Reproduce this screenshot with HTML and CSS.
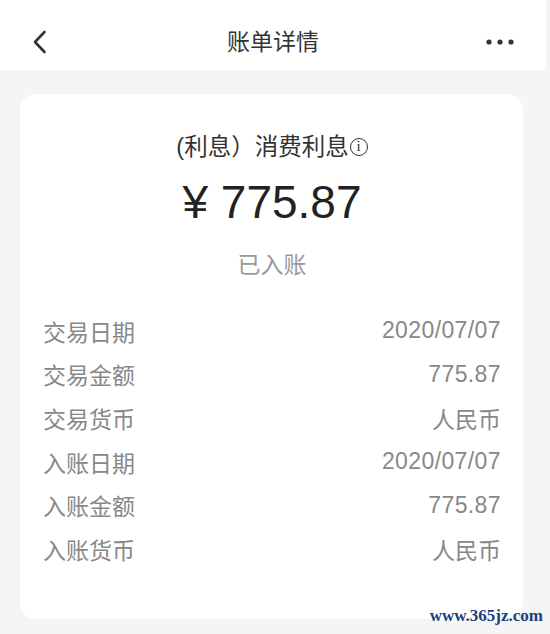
FILE: index.html
```html
<!DOCTYPE html>
<html lang="zh-CN">
<head>
    <meta charset="UTF-8">
    <title>账单详情</title>
    <link rel="stylesheet" href="styles.css">
</head>
<body>
    <!-- Top bar -->
    <div class="topbar">
        <svg class="back" width="16" height="26" viewBox="0 0 16 26">
            <path d="M12.5 3 L3 13 L12.5 23" fill="none" stroke="#333" stroke-width="2.6" stroke-linecap="round" stroke-linejoin="round"/>
        </svg>
        <div class="topbar-title">账单详情</div>
        <svg class="more" width="30" height="8" viewBox="0 0 30 8">
            <circle cx="3" cy="4" r="2.6" fill="#333"/>
            <circle cx="14" cy="4" r="2.6" fill="#333"/>
            <circle cx="25" cy="4" r="2.6" fill="#333"/>
        </svg>
    </div>

    <!-- Bill card -->
    <div class="card">
        <div class="bill-title">(利息）消费利息<span class="info">i</span></div>
        <div class="bill-amount">¥ 775.87</div>
        <div class="bill-status">已入账</div>

        <div class="rows">
            <div class="row"><span>交易日期</span><span class="num">2020/07/07</span></div>
            <div class="row"><span>交易金额</span><span class="num">775.87</span></div>
            <div class="row"><span>交易货币</span><span>人民币</span></div>
            <div class="row"><span>入账日期</span><span class="num">2020/07/07</span></div>
            <div class="row"><span>入账金额</span><span class="num">775.87</span></div>
            <div class="row"><span>入账货币</span><span>人民币</span></div>
        </div>
    </div>

    <div class="watermark">www.365jz.com</div>
</body>
</html>
```

FILE: styles.css
```css
body {
    margin: 0;
    padding: 0;
    background-color: #f5f5f5;
    font-family: "Liberation Sans", "Noto Sans CJK SC", sans-serif;
    color: #333;
    position: relative;
    min-height: 634px;
}
.topbar {
    height: 56px;
    padding: 14px 30px 0 32px;
    margin-right: 4px;
    background-color: #fff;
    display: flex;
    align-items: center;
    justify-content: space-between;
    position: relative;
}
.back {
    display: block;
}
.topbar-title {
    position: absolute;
    left: 0;
    right: 0;
    top: 14px;
    line-height: 56px;
    text-align: center;
    font-size: 23px;
    color: #333;
    pointer-events: none;
}
.more {
    display: block;
}
.card {
    background-color: #fff;
    margin: 24px 27px 0 20px;
    border-radius: 16px;
    padding: 38px 22px 48px 23px;
    text-align: center;
}
.bill-title {
    font-size: 23.5px;
    line-height: 30px;
    color: #333;
}
.info {
    display: inline-block;
    box-sizing: border-box;
    width: 18px;
    height: 18px;
    line-height: 15px;
    margin-left: 1px;
    border: 1.5px solid #333;
    border-radius: 50%;
    font-family: "Liberation Serif", serif;
    font-size: 15px;
    text-align: center;
    vertical-align: 4px;
}
.bill-amount {
    margin-top: 12px;
    font-size: 46px;
    line-height: 56px;
    color: #222;
}
.bill-status {
    margin-top: 20px;
    font-size: 23px;
    line-height: 30px;
    color: #999;
}
.rows {
    margin-top: 29px;
}
.row {
    display: flex;
    justify-content: space-between;
    height: 43.6px;
    align-items: center;
    font-size: 23px;
    color: #888;
}
.num {
    letter-spacing: 0.4px;
}
.watermark {
    position: absolute;
    right: 7px;
    top: 606px;
    font-family: "Liberation Serif", serif;
    font-weight: bold;
    font-size: 17px;
    color: #1d3f7c;
}
```
